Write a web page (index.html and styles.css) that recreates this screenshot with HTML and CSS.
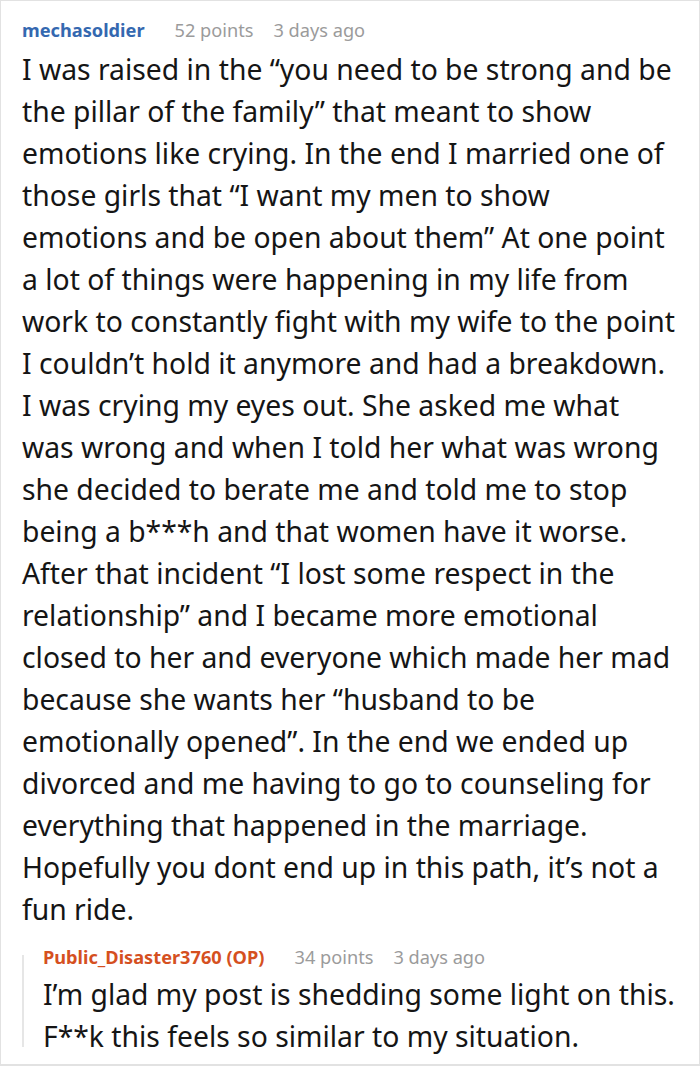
FILE: index.html
```html
<!DOCTYPE html>
<html lang="en">
<head>
<meta charset="utf-8">
<link rel="stylesheet" href="styles.css">
</head>
<body>
<div class="thread">
  <div class="comment">
    <div class="meta">
      <span class="user">mechasoldier</span>
      <span class="info">52 points</span>
      <span class="info">3 days ago</span>
    </div>
    <p class="text">I was raised in the “you need to be strong and be<br>the pillar of the family” that meant to show<br>emotions like crying. In the end I married one of<br>those girls that “I want my men to show<br>emotions and be open about them” At one point<br>a lot of things were happening in my life from<br>work to constantly fight with my wife to the point<br>I couldn’t hold it anymore and had a breakdown.<br>I was crying my eyes out. She asked me what<br>was wrong and when I told her what was wrong<br>she decided to berate me and told me to stop<br>being a b***h and that women have it worse.<br>After that incident “I lost some respect in the<br>relationship” and I became more emotional<br>closed to her and everyone which made her mad<br>because she wants her “husband to be<br>emotionally opened”. In the end we ended up<br>divorced and me having to go to counseling for<br>everything that happened in the marriage.<br>Hopefully you dont end up in this path, it’s not a<br>fun ride.</p>
    <div class="reply">
      <div class="meta">
        <span class="user op">Public_Disaster3760 (OP)</span>
        <span class="info">34 points</span>
        <span class="info">3 days ago</span>
      </div>
      <p class="text">I’m glad my post is shedding some light on this.<br>F**k this feels so similar to my situation.</p>
    </div>
  </div>
</div>
</body>
</html>
```
FILE: styles.css
```css
html, body {
  margin: 0;
  padding: 0;
  background: #fff;
}
.thread {
  box-sizing: border-box;
  width: 700px;
  height: 1066px;
  border: 1px solid #e2e2e2;
  border-bottom-width: 2px;
  overflow: hidden;
  font-family: "Noto Sans", "Open Sans", sans-serif;
}
.comment {
  padding: 17px 4px 0 21px;
}
.meta {
  display: flex;
  gap: 20px;
  align-items: baseline;
  font-size: 18.2px;
  line-height: 24px;
}
.user {
  font-weight: 700;
  color: #3468b0;
  margin-right: 10px;
}
.user.op {
  color: #d5501f;
}
.info {
  color: #9b9b9b;
}
.text {
  margin: 6px 0 0;
  font-size: 28.3px;
  line-height: 42px;
  color: #151515;
}
.reply {
  position: relative;
  margin-top: 15px;
  padding-left: 21px;
}
.reply::before {
  content: "";
  position: absolute;
  left: 0;
  top: 10px;
  height: 92px;
  border-left: 2px solid #e6e6e6;
}
.reply .text {
  margin-top: 4px;
}
```
